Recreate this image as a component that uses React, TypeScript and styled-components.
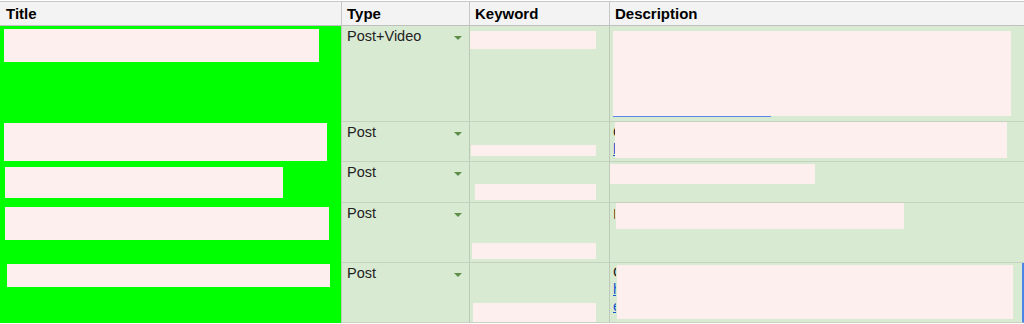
import styled, { createGlobalStyle } from "styled-components";

const GlobalStyle = createGlobalStyle`
  html, body {
    margin: 0;
    padding: 0;
    background: #ffffff;
  }
  body {
    font-family: "Liberation Sans", Arial, sans-serif;
  }
`;

const Sheet = styled.div`
  display: grid;
  grid-template-columns: 341px 128px 140px 1fr;
  padding-top: 1px;
  width: 1024px;
  overflow: hidden;
`;

const HeadCell = styled.div<{ $first?: boolean }>`
  height: 25px;
  box-sizing: border-box;
  display: flex;
  align-items: center;
  padding-left: ${(p) => (p.$first ? 6 : 5)}px;
  background: #f3f3f3;
  border-top: 1px solid #c7c7c7;
  border-bottom: 1px solid #c0c0c0;
  border-left: ${(p) => (p.$first ? "none" : "1px solid #c7c7c7")};
  font-weight: 700;
  font-size: 15px;
  color: #000;
`;

const TitleCell = styled.div<{ $h: number }>`
  height: ${(p) => p.$h}px;
  box-sizing: border-box;
  display: flex;
  align-items: flex-start;
  background: #00ff00;
  overflow: hidden;
`;

const Cell = styled.div<{ $h: number; $selected?: boolean }>`
  height: ${(p) => p.$h}px;
  box-sizing: border-box;
  display: flex;
  align-items: flex-start;
  background: #d9ead3;
  border-left: 1px solid #bccab7;
  border-bottom: 1px solid #c4d2bf;
  border-right: ${(p) => (p.$selected ? "2px solid #4a86e8" : "none")};
  overflow: hidden;
`;

const TypeCell = styled(Cell)`
  justify-content: space-between;
  padding: 2px 7px 0 5px;
  font-size: 14.5px;
  color: #222;
`;

const Chip = styled.span`
  line-height: 17px;
`;

const Caret = styled.span`
  margin-top: 8px;
  width: 0;
  height: 0;
  border-left: 4px solid transparent;
  border-right: 4px solid transparent;
  border-top: 4px solid #5e8f4b;
`;

const Redact = styled.div<{ $top: number; $left: number; $w: number; $h: number }>`
  flex: none;
  margin: ${(p) => p.$top}px 0 0 ${(p) => p.$left}px;
  width: ${(p) => p.$w}px;
  height: ${(p) => p.$h}px;
  background: #fdefed;
`;

const DescStack = styled.div`
  display: flex;
  flex-direction: column;
`;

const LinkTail = styled.div<{ $w: number }>`
  margin-left: 3px;
  width: ${(p) => p.$w}px;
  height: 1px;
  background: #5b8ae6;
`;

/* the first letters of the description text show at the cell edge */
const Peek = styled.div<{ $top: number; $w: number }>`
  flex: none;
  width: ${(p) => p.$w}px;
  margin: ${(p) => p.$top}px 0 0 3px;
  overflow: hidden;
  font-size: 14.5px;
  line-height: 17px;
  color: #222;
  white-space: nowrap;
`;

const Link = styled.div`
  color: #1155cc;
  text-decoration: underline;
`;

type Box = [number, number, number, number];

type Row = {
  h: number;
  type: string;
  title: Box;
  keyword: Box;
};

const rows: Row[] = [
  { h: 96, type: "Post+Video", title: [3, 4, 315, 33], keyword: [5, 0, 126, 18] },
  { h: 40, type: "Post", title: [1, 4, 323, 38], keyword: [23, 1, 125, 11] },
  { h: 41, type: "Post", title: [5, 5, 278, 31], keyword: [22, 5, 121, 16] },
  { h: 60, type: "Post", title: [4, 5, 324, 33], keyword: [40, 2, 124, 16] },
  { h: 60, type: "Post", title: [1, 7, 323, 23], keyword: [40, 3, 123, 20] },
];

const boxProps = ([t, l, w, h]: Box) => ({ $top: t, $left: l, $w: w, $h: h });

const descriptions = [
  (
    <DescStack>
      <Redact {...boxProps([5, 3, 398, 85])} />
      <LinkTail $w={158} />
    </DescStack>
  ),
  (
    <>
      <Peek $top={2} $w={2}>
        C
        <Link>h</Link>
      </Peek>
      <Redact {...boxProps([0, 0, 392, 36])} />
    </>
  ),
  <Redact {...boxProps([2, -1, 206, 20])} />,
  (
    <>
      <Peek $top={3} $w={2}>
        I
      </Peek>
      <Redact {...boxProps([0, 1, 288, 26])} />
    </>
  ),
  (
    <>
      <Peek $top={1} $w={3}>
        C
        <Link>h</Link>
        <Link>e</Link>
      </Peek>
      <Redact {...boxProps([2, 1, 396, 54])} />
    </>
  ),
];

export default function App() {
  return (
    <>
      <GlobalStyle />
      <Sheet>
        <HeadCell $first>Title</HeadCell>
        <HeadCell>Type</HeadCell>
        <HeadCell>Keyword</HeadCell>
        <HeadCell>Description</HeadCell>
        {rows.map((row, i) => (
          <>
            <TitleCell key={`t${i}`} $h={row.h}>
              <Redact {...boxProps(row.title)} />
            </TitleCell>
            <TypeCell key={`y${i}`} $h={row.h}>
              <Chip>{row.type}</Chip>
              <Caret />
            </TypeCell>
            <Cell key={`k${i}`} $h={row.h}>
              <Redact {...boxProps(row.keyword)} />
            </Cell>
            <Cell key={`d${i}`} $h={row.h} $selected={i === rows.length - 1}>
              {descriptions[i]}
            </Cell>
          </>
        ))}
      </Sheet>
    </>
  );
}
